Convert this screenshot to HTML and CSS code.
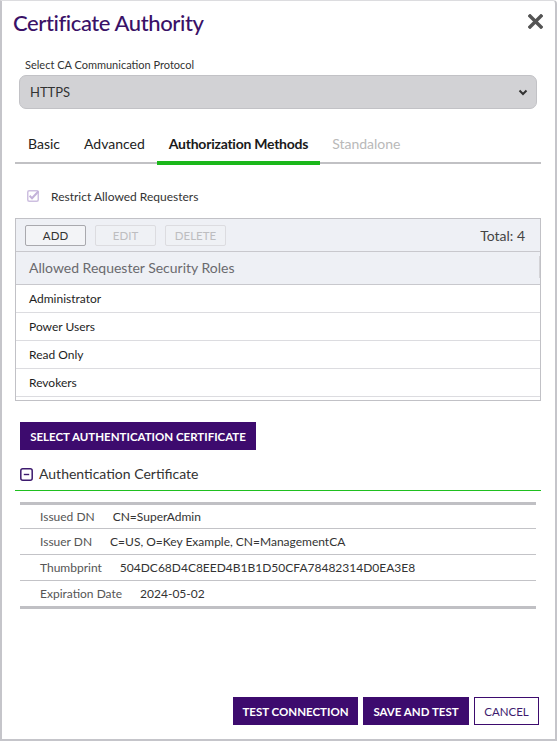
FILE: index.html
```html
<!DOCTYPE html>
<html>
<head>
<meta charset="utf-8">
<link rel="stylesheet" href="styles.css">
</head>
<body>
<div class="dialog">
  <div class="header">
    <h1 class="title">Certificate Authority</h1>
    <svg class="close" width="15" height="15" viewBox="0 0 15 15"><path d="M2 2 L13 13 M13 2 L2 13" stroke="#545454" stroke-width="3.4" stroke-linecap="square"/></svg>
  </div>

  <div class="field">
    <div class="field-label">Select CA Communication Protocol</div>
    <div class="select">
      <span>HTTPS</span>
      <svg width="10" height="7" viewBox="0 0 10 7"><path d="M1.5 1.5 L5 5 L8.5 1.5" stroke="#333" stroke-width="2" fill="none"/></svg>
    </div>
  </div>

  <div class="tabs">
    <div class="tab">Basic</div>
    <div class="tab">Advanced</div>
    <div class="tab active">Authorization Methods</div>
    <div class="tab disabled">Standalone</div>
  </div>

  <div class="check-row">
    <svg class="checkbox" width="12" height="12" viewBox="0 0 12 12"><rect x="0.75" y="0.75" width="10.5" height="10.5" rx="1.5" fill="#fff" stroke="#cdbfe0" stroke-width="1.5"/><path d="M2.6 5.8 L5 8.2 L11.5 1.2" stroke="#c3b2d9" stroke-width="2" fill="none"/></svg>
    <span>Restrict Allowed Requesters</span>
  </div>

  <div class="grid">
    <div class="toolbar">
      <button class="tbtn">ADD</button>
      <button class="tbtn off">EDIT</button>
      <button class="tbtn off">DELETE</button>
      <span class="total">Total: 4</span>
    </div>
    <div class="grid-head"><span>Allowed Requester Security Roles</span><i class="resizer"></i></div>
    <div class="grid-body">
      <div class="grid-row">Administrator</div>
      <div class="grid-row">Power Users</div>
      <div class="grid-row">Read Only</div>
      <div class="grid-row">Revokers</div>
    </div>
  </div>

  <button class="primary select-cert">SELECT AUTHENTICATION CERTIFICATE</button>

  <div class="section-head">
    <svg width="13" height="13" viewBox="0 0 13 13"><rect x="0.8" y="0.8" width="11.4" height="11.4" rx="2" fill="none" stroke="#3d1a6e" stroke-width="1.5"/><path d="M3.8 6.5 H9.2" stroke="#3d1a6e" stroke-width="1.4"/></svg>
    <span>Authentication Certificate</span>
  </div>

  <div class="details">
    <div class="drow"><span class="dl">Issued DN</span><span class="dv">CN=SuperAdmin</span></div>
    <div class="drow"><span class="dl">Issuer DN</span><span class="dv">C=US, O=Key Example, CN=ManagementCA</span></div>
    <div class="drow"><span class="dl">Thumbprint</span><span class="dv">504DC68D4C8EED4B1B1D50CFA78482314D0EA3E8</span></div>
    <div class="drow"><span class="dl">Expiration Date</span><span class="dv">2024-05-02</span></div>
  </div>

  <div class="footer">
    <button class="primary fbtn">TEST CONNECTION</button>
    <button class="primary fbtn">SAVE AND TEST</button>
    <button class="fbtn outline">CANCEL</button>
  </div>
</div>
</body>
</html>
```

FILE: styles.css
```css
* { box-sizing: border-box; }
html, body { margin: 0; padding: 0; background: #fff; }
body { font-family: Lato, "Open Sans", sans-serif; color: #333; }

.dialog {
  width: 557px;
  height: 741px;
  border: 2px solid #c5c5ca;
  border-top: 1px solid #dcdcdf;
  border-top-right-radius: 4px;
  display: flex;
  flex-direction: column;
  background: #fff;
}

.header {
  display: flex;
  justify-content: space-between;
  align-items: flex-start;
  padding: 8px 12px 0 11px;
}
.title {
  margin: 0;
  font-size: 22px;
  letter-spacing: -0.4px;
  line-height: 28px;
  font-weight: 500;
  color: #3a1167;
}
.close { margin-top: 5px; }

.field { padding: 0 18px 0 17px; margin-top: 21px; }
.field-label { font-size: 11px; line-height: 14px; padding-left: 6px; color: #333; }
.select {
  margin-top: 3px;
  height: 34px;
  background: #d2d2d5;
  border: 1px solid #c2c2c6;
  border-radius: 7px;
  display: flex;
  align-items: center;
  justify-content: space-between;
  padding: 0 8px 0 10px;
  font-size: 13px;
  color: #333;
}

.tabs {
  display: flex;
  margin: 26px 14px 0 13px;
  border-bottom: 2px solid #c1c1c4;
}
.tab {
  padding: 0 12px 8px;
  font-size: 14px;
  line-height: 18px;
  color: #222;
  border-bottom: 4px solid transparent;
  margin-bottom: -3px;
}
.tab:first-child { padding-left: 13px; padding-right: 12px; }
.tab.active { border-bottom-color: #1bb71b; font-weight: 700; letter-spacing: -0.25px; color: #1a1a1a; }
.tab.disabled { color: #b9b9b9; }

.check-row {
  display: flex;
  align-items: center;
  margin: 25px 0 0 25px;
  font-size: 12px;
  color: #333;
  height: 14px;
}
.checkbox { margin-right: 12px; }

.grid {
  margin: 15px 14px 0 13px;
  border: 1px solid #c1c1c6;
}
.toolbar {
  height: 32px;
  background: #eef0f5;
  display: flex;
  align-items: center;
  padding: 0 15px 0 9px;
  gap: 9px;
}
.tbtn {
  height: 21px;
  width: 61px;
  font-family: inherit;
  font-size: 11.5px;
  color: #333;
  background: #f3f4f7;
  border: 1px solid #a9a9ae;
  border-radius: 2px;
  padding: 0;
}
.tbtn.off { color: #bdbdc0; border-color: #dcdce0; background: #eff1f5; }
.total { margin-left: auto; font-size: 14px; color: #444; }

.grid-head {
  height: 34px;
  background: #eef0f5;
  border-top: 1px solid #c8c8cd;
  border-bottom: 1px solid #c8c8cd;
  display: flex;
  align-items: center;
  justify-content: space-between;
  padding: 0 0 2px 13px;
  font-size: 14px;
  color: #6a6a6e;
}
.resizer { width: 1px; height: 22px; background: #d3d3d7; display: block; }
.grid-body { padding-bottom: 3px; }
.grid-row {
  height: 28px;
  border-bottom: 1px solid #dcdce0;
  display: flex;
  align-items: center;
  padding-left: 13px;
  font-size: 12px;
  color: #1e1e1e;
}

.primary {
  background: #3d0b6e;
  color: #fff;
  border: none;
  font-family: inherit;
  font-weight: 700;
  font-size: 11.5px;
  padding: 0;
}
.select-cert {
  align-self: flex-start;
  margin: 21px 0 0 18px;
  height: 28px;
  width: 236px;
}

.section-head {
  display: flex;
  align-items: center;
  gap: 6px;
  margin: 15px 14px 0 13px;
  padding: 0 0 7px 5px;
  border-bottom: 1px solid #1fc01f;
  font-size: 14px;
  line-height: 18px;
  color: #333;
}

.details {
  margin: 11px 19px 0 18px;
  border-top: 3px solid #c0c0c4;
  border-bottom: 3px solid #c0c0c4;
}
.drow {
  height: 26px;
  display: flex;
  align-items: center;
  gap: 18px;
  padding-left: 20px;
  font-size: 12px;
  border-bottom: 1px solid #c3c3c7;
}
.drow:first-child { height: 24px; }
.drow:last-child { height: 25px; border-bottom: none; }
.dl { color: #555; }
.dv { color: #333; }

.footer {
  margin-top: auto;
  display: flex;
  justify-content: flex-end;
  gap: 5px;
  padding: 0 16px 14px 0;
}
.fbtn { height: 28px; }
.fbtn:nth-child(1) { width: 125px; }
.fbtn:nth-child(2) { width: 106px; }
.outline {
  width: 65px;
  background: #fff;
  color: #3d1a6e;
  border: 1px solid #3d0b6e;
  font-family: inherit;
  font-size: 11.5px;
  padding: 0;
}
```
